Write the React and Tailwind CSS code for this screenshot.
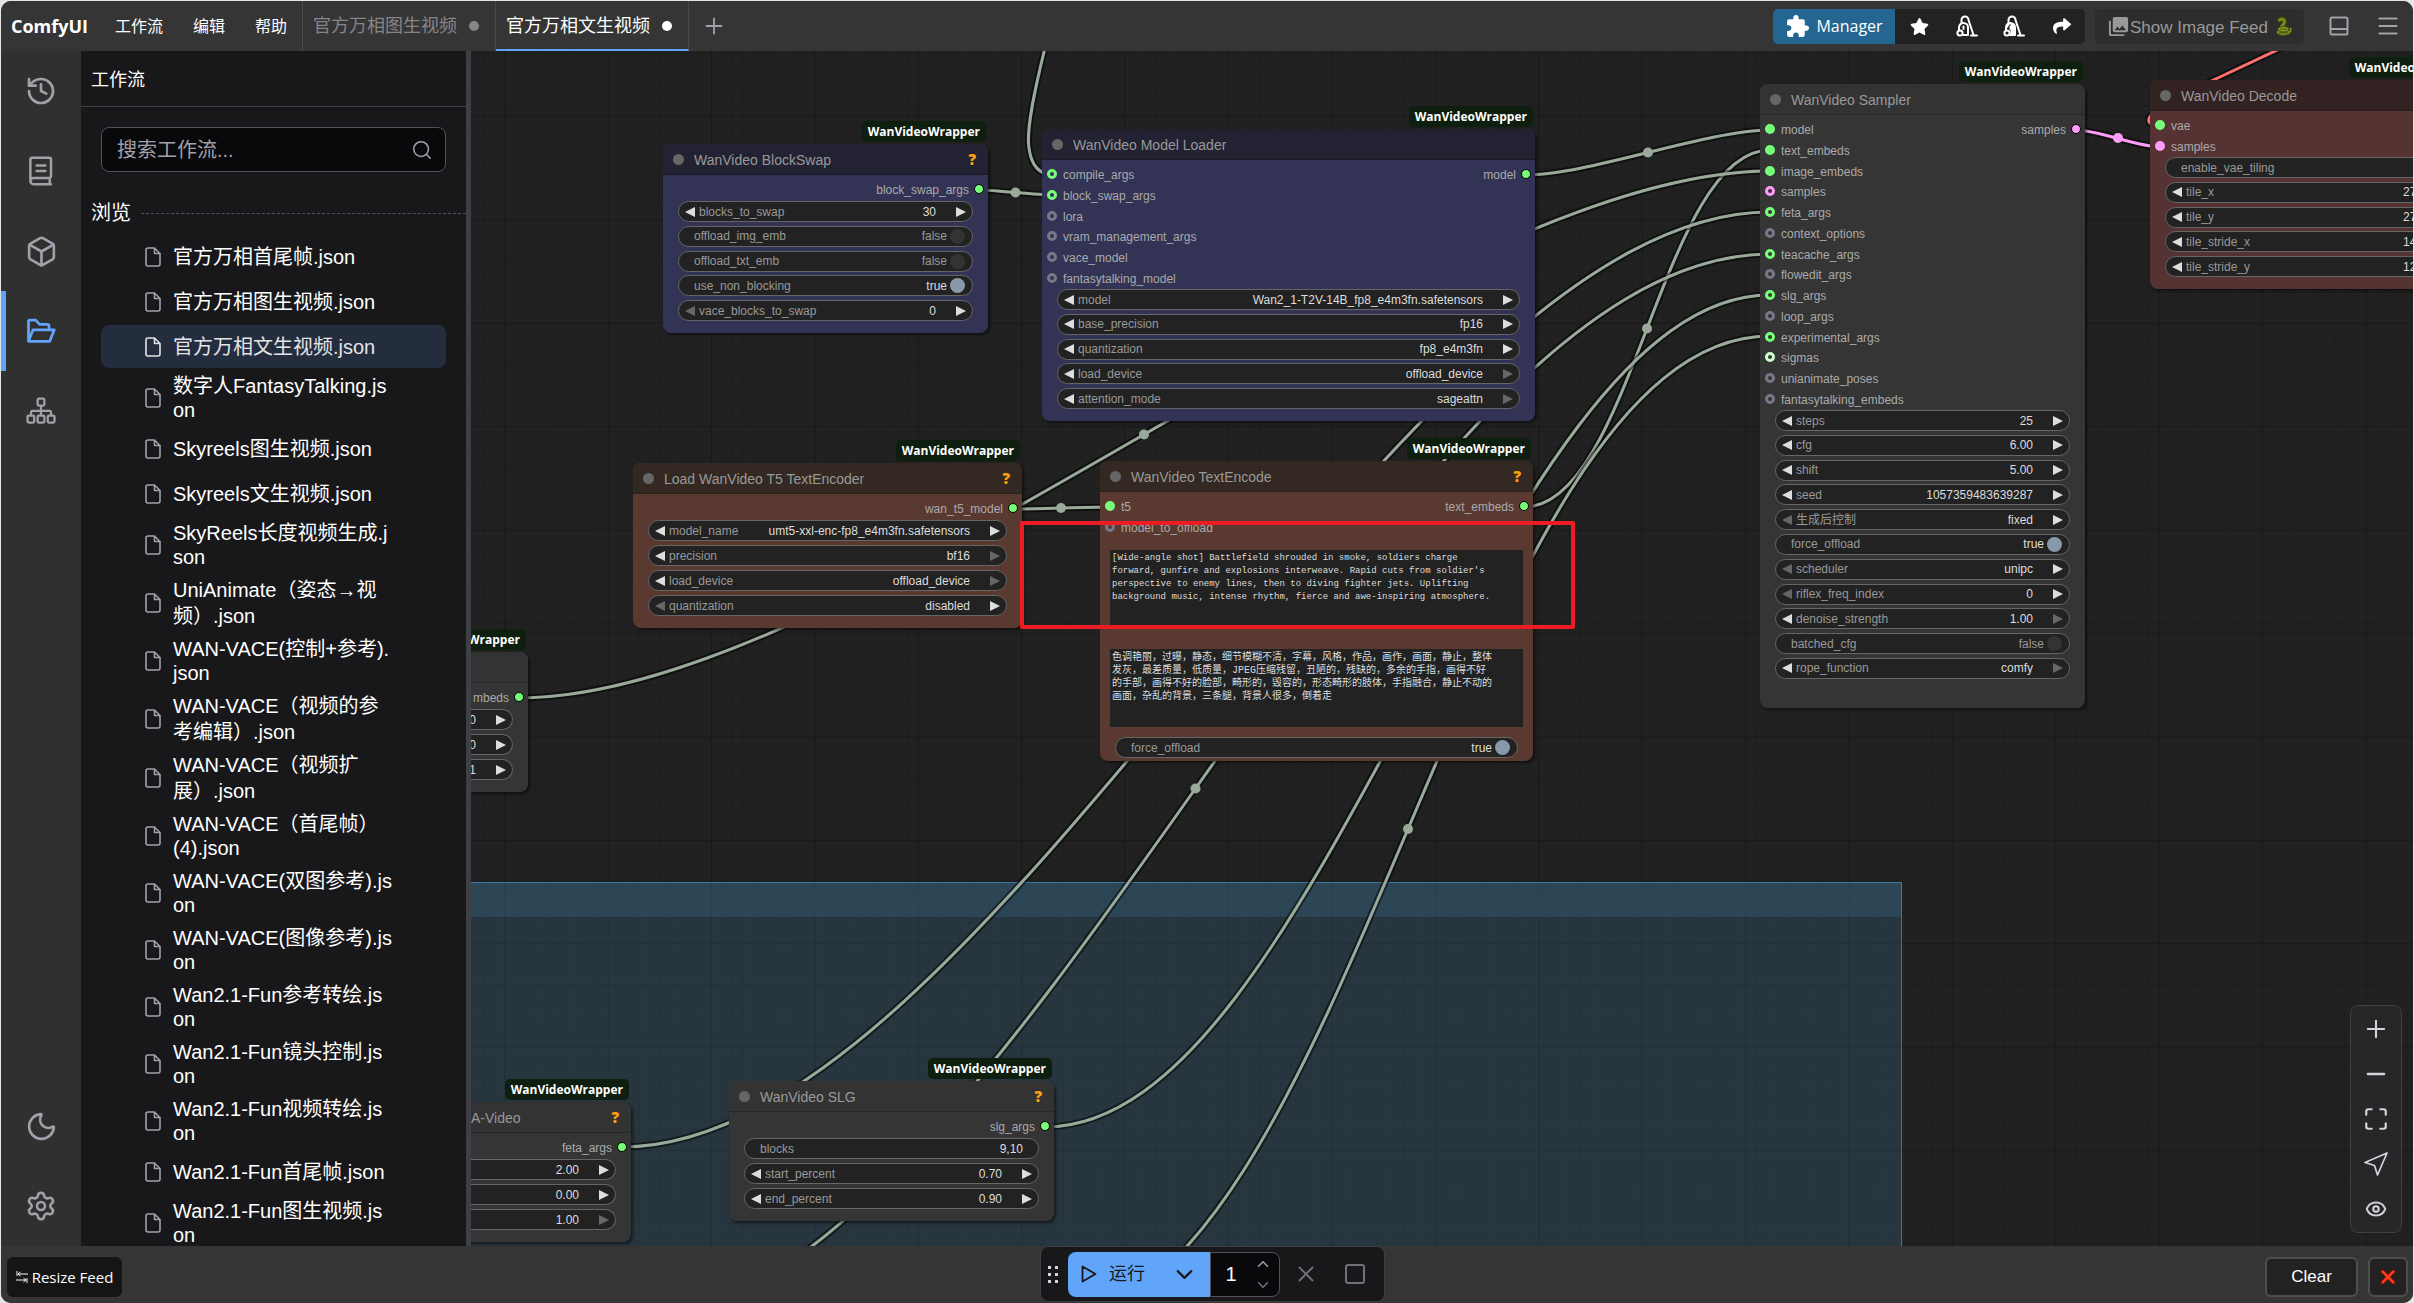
import React, { useId } from "react";
import { Box, ChevronDown, ChevronUp, Eye, History, Maximize, Menu, Minus, Moon, Plus, Search, Settings, X } from "lucide-react";
import { FaShare, FaStar } from "react-icons/fa";
import { MdExtension, MdPhotoLibrary } from "react-icons/md";

/* ---------- icons ---------- */

const BookIcon = () => (
  <svg viewBox="0 0 24 24" className="size-[30px]" fill="none" stroke="currentColor" strokeWidth="2" strokeLinejoin="round" strokeLinecap="round">
    <path d="M3.5 20V3a1.6 1.6 0 0 1 1.6-1.6h13.4a1.5 1.5 0 0 1 1.5 1.5V16a1.5 1.5 0 0 1-1.5 1.5H6a2.5 2.5 0 0 0 0 5h14M19 17.5v5M8.5 7.5h7M8.5 12h7" />
  </svg>
);

const FolderIcon = () => (
  <svg viewBox="0 0 24 24" className="size-[30px]" fill="none" stroke="currentColor" strokeWidth="2.2" strokeLinejoin="round" strokeLinecap="round">
    <path d="M2 19V4.500a1.200 1.200 0 0 1 1.200-1.200h4.600l3 3.400h6.400a1.200 1.200 0 0 1 1.200 1.200v3M2 20.200 5.600 11h17L19 20.200z" />
  </svg>
);

const SitemapIcon = () => (
  <svg viewBox="0 0 24 24" className="size-[30px]" fill="none" stroke="currentColor" strokeWidth="1.8" strokeLinejoin="round">
    <rect x="9.300" y="2" width="5.400" height="5.600" rx="1" />
    <rect x="1.200" y="15.600" width="5.400" height="5.600" rx="1" />
    <rect x="9.300" y="15.600" width="5.400" height="5.600" rx="1" />
    <rect x="17.400" y="15.600" width="5.400" height="5.600" rx="1" />
    <path d="M12 7.600v8M4 15.600v-2.600a1.200 1.200 0 0 1 1.200-1.200h13.600a1.200 1.200 0 0 1 1.200 1.200v2.600" />
  </svg>
);

const FileIcon = () => (
  <svg viewBox="0 0 16 20" className="h-5 w-4 shrink-0" fill="none" stroke="currentColor" strokeWidth="1.6" strokeLinejoin="round">
    <path d="M3 1h6.500L15 6.500V17a2 2 0 0 1-2 2H3a2 2 0 0 1-2-2V3a2 2 0 0 1 2-2zM9.500 1v5.500H15" />
  </svg>
);

const VacuumIcon = ({ solid }) => (
  <svg viewBox="0 0 24 24" className="size-6" fill="none" stroke="currentColor" strokeWidth="2" strokeLinejoin="round" strokeLinecap="round">
    <path d="M6.500 9V6a3.500 3.500 0 0 1 7 0l5 15M16 21.500h6" />
    <path d="M8.500 9a4.500 4.500 0 0 1 4.500 4.500V21H8.500M8.500 9A4.500 4.500 0 0 0 4 13.500V16" fill={solid ? "currentColor" : "none"} />
    <path d="M8.500 12.500v2.500" />
    <circle cx="5" cy="19" r="2.600" />
  </svg>
);

const SnakeIcon = () => (
  <svg viewBox="0 0 18 22" className="h-[22px] w-[16px]" fill="none" strokeLinecap="round" strokeLinejoin="round">
    <path d="M3.500 4.500C6 2 10 2.500 10 6.500c0 3-3.500 3.500-3.500 6" stroke="#3d4a10" strokeWidth="5" />
    <path d="M4 4.500C6 2.500 9.500 3 9.500 6.500c0 3-3.500 3.500-3.500 6" stroke="#7d8a1c" strokeWidth="3" />
    <ellipse cx="8.500" cy="18" rx="8" ry="3.600" fill="#7d8a1c" stroke="#3d4a10" />
    <ellipse cx="8.500" cy="14.500" rx="6.500" ry="3" fill="#8b9a22" stroke="#3d4a10" />
    <path d="M14 18c2 0 3-1 2.500-4" stroke="#7d8a1c" strokeWidth="2" />
    <path d="M5 14.500h7M4 18.500h9" stroke="#3d4a10" />
  </svg>
);

const PanelIcon = () => (
  <svg viewBox="0 0 20 20" className="size-5" fill="none" stroke="currentColor" strokeWidth="2" strokeLinejoin="round">
    <rect x="1.500" y="1.500" width="17" height="17" rx="1.500" />
    <path d="M1.500 13h17" />
  </svg>
);

const Arrow = ({ dir, dim }) => (
  <svg viewBox="0 0 10 10" className={`size-[10px] shrink-0 ${dim ? "text-[#666]" : "text-[#ddd]"}`} fill="currentColor">
    <path d={dir === "left" ? "M10 0v10L0 5z" : "M0 0v10l10-5z"} />
  </svg>
);

/* ---------- sidebar ---------- */

const FILES = [
  ["官方万相首尾帧.json"],
  ["官方万相图生视频.json"],
  ["官方万相文生视频.json", "active"],
  ["数字人FantasyTalking.js\non"],
  ["Skyreels图生视频.json"],
  ["Skyreels文生视频.json"],
  ["SkyReels长度视频生成.j\nson"],
  ["UniAnimate（姿态→视\n频）.json", "tall"],
  ["WAN-VACE(控制+参考).\njson"],
  ["WAN-VACE（视频的参\n考编辑）.json", "tall"],
  ["WAN-VACE（视频扩\n展）.json", "tall"],
  ["WAN-VACE（首尾帧）\n(4).json"],
  ["WAN-VACE(双图参考).js\non"],
  ["WAN-VACE(图像参考).js\non"],
  ["Wan2.1-Fun参考转绘.js\non"],
  ["Wan2.1-Fun镜头控制.js\non"],
  ["Wan2.1-Fun视频转绘.js\non"],
  ["Wan2.1-Fun首尾帧.json"],
  ["Wan2.1-Fun图生视频.js\non"],
];

function FileRow({ name, kind }) {
  const two = name.includes("\n");
  const height = kind === "tall" ? "h-[59px]" : two ? "h-[57px]" : "h-[45px]";
  const look = kind === "active" ? "bg-[#232d3d] text-[#e4e4e7]" : "";
  return (
    <li className={`flex shrink-0 py-px ${height}`}>
      <button type="button" className={`flex w-full items-center gap-3 rounded-lg pl-11 text-left ${look}`}>
        <span className={kind === "active" ? "text-[#e4e4e7]" : "text-[#a1a1aa]"}><FileIcon /></span>
        <span className={`whitespace-pre ${kind === "tall" ? "leading-[26px]" : "leading-[24px]"}`}>{name}</span>
      </button>
    </li>
  );
}

function RailButton({ label, active, children }) {
  return (
    <button type="button" aria-label={label} className={`flex h-20 w-full items-center justify-center border-l-[5px] pr-[5px] ${active ? "border-[#60a5fa] text-[#60a5fa]" : "border-transparent text-[#a1a1aa]"}`}>
      {children}
    </button>
  );
}

/* ---------- nodes ---------- */

const PALETTE = {
  blue: ["bg-[#222233]", "bg-[#333355]"],
  brown: ["bg-[#332922]", "bg-[#593930]"],
  red: ["bg-[#332222]", "bg-[#553333]"],
  gray: ["bg-[#333333]", "bg-[#353535]"],
};

const DOT = {
  g: "bg-[#77ff77] border-[#77ff77]",
  p: "bg-[#ff9cf9] border-[#ff9cf9]",
  og: "border-[#77ff77]",
  op: "border-[#ff9cf9]",
  on: "border-[#777788]",
  os: "border-[#ccffcc]",
};

function Widget({ w, cut }) {
  const id = useId();
  const [type, label, value, dimL, dimR] = w;
  const shell = `flex h-[21px] w-full items-center border border-[#666] bg-[#222] text-[12px] leading-[14px] ${cut ? "rounded-r-full border-l-0" : "rounded-full"}`;
  if (type === "toggle") {
    return (
      <label htmlFor={id} className={`${shell} pl-[15px] pr-[7px]`}>
        <span className="flex-1 text-[#999]">{label}</span>
        <span className={value ? "text-[#ddd]" : "text-[#999]"}>{value ? "true" : "false"}</span>
        <input id={id} type="checkbox" defaultChecked={value} className="ml-[3px] size-[15px] appearance-none rounded-full bg-[#333] checked:bg-[#8899aa]" />
      </label>
    );
  }
  if (type === "text") {
    return (
      <div className={`${shell} px-[15px]`}>
        <label htmlFor={id} className="text-[#999]">{label}</label>
        <input id={id} defaultValue={value} className="min-w-0 flex-1 bg-transparent text-right text-[#ddd] outline-none" />
      </div>
    );
  }
  return (
    <div className={`${shell} px-[6px]`}>
      {!cut && <button type="button" aria-label="decrease"><Arrow dir="left" dim={dimL} /></button>}
      {!cut && <label htmlFor={id} className="ml-1 text-[#999]">{label}</label>}
      {type === "combo" ? (
        <select id={id} defaultValue={value} className="min-w-0 flex-1 appearance-none bg-transparent p-0 text-right text-[#ddd] outline-none [text-align-last:right]">
          <option>{value}</option>
        </select>
      ) : (
        <input id={id} aria-label={cut ? "value" : undefined} defaultValue={value} className="min-w-0 flex-1 bg-transparent text-right text-[#ddd] outline-none" />
      )}
      <button type="button" aria-label="increase" className="ml-5"><Arrow dir="right" dim={dimR} /></button>
    </div>
  );
}

function Node({ place, color, title, badge = "WanVideoWrapper", help, slots, slotsH, outputs = [], widgets, widgetsH, pad = "pb-3", cut, children }) {
  const [head, body] = PALETTE[color];
  return (
    <section className={`absolute ${place} ${body} ${cut ? "rounded-r-lg" : "rounded-lg"} shadow-[2px_2px_3px_rgba(0,0,0,0.5)]`}>
      <span className="absolute right-[2px] bottom-full mb-[2px] flex h-[21px] items-center rounded-[5px] bg-[#0f1f0f] px-[6px] font-['Open_Sans',sans-serif] text-[12px] font-bold whitespace-nowrap text-white">
        {badge}
      </span>
      <header className={`flex h-[31px] items-center border-b border-black/20 pr-[12px] ${head} ${cut ? "rounded-tr-lg" : "rounded-t-lg pl-[10px]"}`}>
        {!cut && <span className="mr-[10px] size-[11px] rounded-full bg-[#666]" />}
        <h2 className={`flex-1 pt-[2px] text-[14px] whitespace-nowrap text-[#999] ${cut ? "pl-2" : ""}`}>{title}</h2>
        {help && <button type="button" className="font-['Open_Sans',sans-serif] text-[15px] font-extrabold text-[#ffa10a]">?</button>}
      </header>
      <div className={`pt-1 ${pad}`}>
        <div className={`flex justify-between text-[12px] leading-[20px] text-[#aaa] ${slotsH}`}>
          <ul className={`flex flex-col justify-between ${cut ? "" : "pl-[5px]"}`}>
            {slots.map(([kind, name]) => (
              <li key={name} className="flex h-5 items-center gap-[6px]">
                <span className={`size-[10px] rounded-full border-[3px] ${DOT[kind]}`} />
                <span className="pt-[2px]">{name}</span>
              </li>
            ))}
          </ul>
          <ul className="pr-1">
            {outputs.map(([kind, name]) => (
              <li key={name} className="flex h-5 items-center gap-[5px]">
                <span className="pt-[2px]">{name}</span>
                <span className={`size-[10px] rounded-full border border-black ${kind === "p" ? "bg-[#ff9cf9]" : "bg-[#77ff77]"}`} />
              </li>
            ))}
          </ul>
        </div>
        {children}
        <div className={`mt-px flex flex-col justify-between ${widgetsH} ${cut ? "pr-[15px]" : "px-[15px]"}`}>
          {widgets.map((w, i) => <Widget key={i} w={w} cut={cut} />)}
        </div>
      </div>
    </section>
  );
}

/* ---------- links ---------- */

function spline(x0, y0, x1, y1) {
  const d = Math.hypot(x1 - x0, y1 - y0) / 4;
  return `M${x0} ${y0}C${x0 + d} ${y0} ${x1 - d} ${y1} ${x1} ${y1}`;
}

const LINKS = [
  [979, 190, 1052, 195], [1526, 175, 1770, 130], [1524, 507, 1770, 150], [518, 698, 1770, 171], [1013, 509, 1109, 507],
  [621, 1147, 1770, 212], [621, 1323, 1770, 254], [1045, 1127, 1770, 295], [1046, 1322, 1770, 336],
];

function Link({ d, color = "#9aaa9a", dot }) {
  return (
    <g>
      <path d={d} fill="none" stroke="#000" strokeOpacity="0.5" strokeWidth="7" />
      <path d={d} fill="none" stroke={color} strokeWidth="3" />
      {dot && <circle cx={dot[0]} cy={dot[1]} r="5" fill={color} />}
    </g>
  );
}

function Backdrop() {
  return (
    <svg className="absolute inset-0 size-full" aria-hidden="true">
      <defs>
        <pattern id="grid" width="100" height="100" patternUnits="userSpaceOnUse" patternTransform="translate(711 116) scale(1.034)">
          <path d="M10.500 0V100M20.500 0V100M30.500 0V100M40.500 0V100M50.500 0V100M60.500 0V100M70.500 0V100M80.500 0V100M90.500 0V100M0 10.500H100M0 20.500H100M0 30.500H100M0 40.500H100M0 50.500H100M0 60.500H100M0 70.500H100M0 80.500H100M0 90.500H100" stroke="#000" strokeOpacity="0.11" />
          <path d="M0.500 0V100M0 0.500H100" stroke="#000" strokeOpacity="0.25" />
        </pattern>
      </defs>
      <g transform="translate(-471 -51)">
        <rect x="471" y="51" width="100%" height="100%" fill="url(#grid)" />
        <rect x="400" y="882" width="1502" height="35" fill="#3f789e" fillOpacity="0.43" />
        <rect x="400" y="917" width="1502" height="600" fill="#3f789e" fillOpacity="0.24" />
        <path d="M400 882.500H1901.500V1500" fill="none" stroke="#3f789e" />
        <Link d="M1046 44C1034 92 1026 130 1029 148C1031 164 1038 174 1052 175" />
        {LINKS.map(([a, b, c, e]) => <Link key={`${a}-${b}`} d={spline(a, b, c, e)} dot={[(a + c) / 2, (b + e) / 2]} />)}
        <Link d="M2290 44L2205 84C2150 108 2136 124 2160 126" color="#ff6e6e" />
        <Link d={spline(2076, 130, 2160, 147)} color="#ff9cf9" dot={[2118, 138]} />
      </g>
    </svg>
  );
}

const POSITIVE = "[Wide-angle shot] Battlefield shrouded in smoke, soldiers charge\nforward, gunfire and explosions interweave. Rapid cuts from soldier's\nperspective to enemy lines, then to diving fighter jets. Uplifting\nbackground music, intense rhythm, fierce and awe-inspiring atmosphere.";
const NEGATIVE = "色调艳丽，过曝，静态，细节模糊不清，字幕，风格，作品，画作，画面，静止，整体\n发灰，最差质量，低质量，JPEG压缩残留，丑陋的，残缺的，多余的手指，画得不好\n的手部，画得不好的脸部，畸形的，毁容的，形态畸形的肢体，手指融合，静止不动的\n画面，杂乱的背景，三条腿，背景人很多，倒着走";

function Canvas() {
  return (
    <main className="relative min-w-0 flex-1 overflow-hidden bg-[#212121]">
      <Backdrop />
      <Node place="left-[192px] top-[93px] w-[325px]" color="blue" title="WanVideo BlockSwap" help slots={[]} slotsH="h-[21px]" outputs={[["g", "block_swap_args"]]} widgetsH="h-[120px]"
        widgets={[["num", "blocks_to_swap", "30"], ["toggle", "offload_img_emb", false], ["toggle", "offload_txt_emb", false], ["toggle", "use_non_blocking", true], ["num", "vace_blocks_to_swap", "0", true]]} />
      <Node place="left-[571px] top-[78px] w-[493px]" color="blue" title="WanVideo Model Loader" slotsH="h-[124px]" outputs={[["g", "model"]]} widgetsH="h-[120px]"
        slots={[["og", "compile_args"], ["og", "block_swap_args"], ["on", "lora"], ["on", "vram_management_args"], ["on", "vace_model"], ["on", "fantasytalking_model"]]}
        widgets={[["combo", "model", "Wan2_1-T2V-14B_fp8_e4m3fn.safetensors"], ["combo", "base_precision", "fp16"], ["combo", "quantization", "fp8_e4m3fn"], ["combo", "load_device", "offload_device", false, true], ["combo", "attention_mode", "sageattn", false, true]]} />
      <Node place="left-[1289px] top-[33px] w-[325px]" color="gray" title="WanVideo Sampler" slotsH="h-[290px]" outputs={[["p", "samples"]]} widgetsH="h-[269px]" pad="pb-[29px]"
        slots={[["g", "model"], ["g", "text_embeds"], ["g", "image_embeds"], ["op", "samples"], ["og", "feta_args"], ["on", "context_options"], ["og", "teacache_args"], ["on", "flowedit_args"], ["og", "slg_args"], ["on", "loop_args"], ["og", "experimental_args"], ["os", "sigmas"], ["on", "unianimate_poses"], ["on", "fantasytalking_embeds"]]}
        widgets={[["num", "steps", "25"], ["num", "cfg", "6.00"], ["num", "shift", "5.00"], ["num", "seed", "1057359483639287"], ["combo", "生成后控制", "fixed", true], ["toggle", "force_offload", true], ["combo", "scheduler", "unipc", true], ["num", "riflex_freq_index", "0", true], ["num", "denoise_strength", "1.00", false, true], ["toggle", "batched_cfg", false], ["combo", "rope_function", "comfy", false, true]]} />
      <Node place="left-[1679px] top-[29px] w-[325px]" color="red" title="WanVideo Decode" slotsH="h-[41px]" widgetsH="h-[120px]"
        slots={[["g", "vae"], ["p", "samples"]]}
        widgets={[["toggle", "enable_vae_tiling", true], ["num", "tile_x", "272"], ["num", "tile_y", "272"], ["num", "tile_stride_x", "144"], ["num", "tile_stride_y", "128"]]} />
      <Node place="left-[162px] top-[412px] w-[389px]" color="brown" title="Load WanVideo T5 TextEncoder" help slots={[]} slotsH="h-[21px]" outputs={[["g", "wan_t5_model"]]} widgetsH="h-[96px]"
        widgets={[["combo", "model_name", "umt5-xxl-enc-fp8_e4m3fn.safetensors"], ["combo", "precision", "bf16", false, true], ["combo", "load_device", "offload_device", false, true], ["combo", "quantization", "disabled", true]]} />
      <Node place="left-[629px] top-[410px] w-[433px]" color="brown" title="WanVideo TextEncode" help slotsH="h-[41px]" outputs={[["g", "text_embeds"]]} widgetsH="h-[21px]" pad="pb-[3px]"
        slots={[["g", "t5"], ["on", "model_to_offload"]]} widgets={[["toggle", "force_offload", true]]}>
        <div className="mt-[13px] mb-[10px] flex flex-col gap-[21px] px-[10px]">
          <textarea aria-label="positive prompt" defaultValue={POSITIVE} className="h-[78px] w-full resize-none overflow-hidden bg-[#222] p-[2px] font-['Liberation_Mono',monospace] text-[9px] leading-[13px] whitespace-pre text-[#ddd]" />
          <textarea aria-label="negative prompt" defaultValue={NEGATIVE} className="h-[78px] w-full resize-none overflow-hidden bg-[#222] p-[2px] font-['Liberation_Mono','Noto_Sans_CJK_SC',monospace] text-[10px] leading-[13px] whitespace-pre text-[#ddd]" />
        </div>
      </Node>
      <Node place="-left-[8px] top-[601px] w-[65px]" color="gray" title="" badge="Wrapper" cut slots={[]} slotsH="h-[21px]" outputs={[["g", "mbeds"]]} widgetsH="h-[71px]"
        widgets={[["num", "", "0"], ["num", "", "0"], ["num", "", "1"]]} />
      <Node place="-left-[8px] top-[1051px] w-[168px]" color="gray" title="A-Video" help cut slots={[]} slotsH="h-[21px]" outputs={[["g", "feta_args"]]} widgetsH="h-[71px]"
        widgets={[["num", "", "2.00"], ["num", "", "0.00"], ["num", "", "1.00", false, true]]} />
      <Node place="left-[258px] top-[1030px] w-[325px]" color="gray" title="WanVideo SLG" help slots={[]} slotsH="h-[21px]" outputs={[["g", "slg_args"]]} widgetsH="h-[71px]"
        widgets={[["text", "blocks", "9,10"], ["num", "start_percent", "0.70"], ["num", "end_percent", "0.90"]]} />

      <div className="absolute top-[470px] left-[549px] h-[108px] w-[555px] rounded-[2px] border-4 border-[#ed1c24]" />

      <div className="absolute right-[11px] bottom-[13px] flex w-[52px] flex-col rounded-lg border border-[#3f3f46] bg-[#27272a] text-[#d4d4d8]">
        <button type="button" aria-label="zoom in" className="flex h-[45px] items-center justify-center"><Plus size={28} strokeWidth={1.8} /></button>
        <button type="button" aria-label="zoom out" className="flex h-[45px] items-center justify-center"><Minus size={28} strokeWidth={2} /></button>
        <button type="button" aria-label="fit view" className="flex h-[45px] items-center justify-center"><Maximize size={26} strokeWidth={2} /></button>
        <button type="button" aria-label="select mode" className="flex h-[45px] items-center justify-center">
          <svg viewBox="0 0 24 24" className="size-6" fill="none" stroke="currentColor" strokeWidth="1.700" strokeLinejoin="round"><path d="M23 1 13.500 23l-3-9.500L1 10.500z" /></svg>
        </button>
        <button type="button" aria-label="toggle links" className="flex h-[46px] items-center justify-center"><Eye size={22} strokeWidth={2.2} /></button>
      </div>
    </main>
  );
}

/* ---------- shell ---------- */

function TopBar() {
  return (
    <header className="flex h-[50px] shrink-0 items-stretch bg-[#353535] text-white">
      <div className="flex w-[302px] items-center border-r border-[#4a4a4d] pl-[10px] whitespace-nowrap">
        <h1 className="w-[104px] font-['Open_Sans',sans-serif] text-[18px] font-bold">ComfyUI</h1>
        <nav className="flex gap-[30px] pt-[2px] text-[16px]">
          <button type="button">工作流</button>
          <button type="button">编辑</button>
          <button type="button">帮助</button>
        </nav>
      </div>
      <button type="button" className="flex w-[193px] items-center justify-between border-r border-[#4a4a4d] pr-[16px] pl-[10px] text-[18px] whitespace-nowrap text-[#85858a]">
        官方万相图生视频<span className="size-[10px] rounded-full bg-[#85858a]" />
      </button>
      <button type="button" className="flex w-[193px] items-center justify-between border-r border-b-2 border-r-[#4a4a4d] border-b-[#60a5fa] pt-[2px] pr-[16px] pl-[10px] text-[18px] whitespace-nowrap">
        官方万相文生视频<span className="size-[10px] rounded-full bg-white" />
      </button>
      <button type="button" aria-label="new workflow" className="w-[50px] pl-[12px] text-[#a1a1aa]"><Plus size={26} strokeWidth={1.7} /></button>
      <div className="flex-1" />
      <div className="flex items-center pr-[12px]">
        <div className="flex h-[35px] overflow-hidden rounded-[5px] bg-[#222]">
          <button type="button" className="flex w-[122px] items-center justify-center gap-[6px] bg-[#236692] font-['Open_Sans',sans-serif] text-[16px]">
            <MdExtension size={25} />Manager
          </button>
          <button type="button" aria-label="favorites" className="flex w-[48px] items-center justify-center"><FaStar size={19} /></button>
          <button type="button" aria-label="unload models" className="flex w-[47px] items-center justify-center"><VacuumIcon /></button>
          <button type="button" aria-label="free cache" className="flex w-[48px] items-center justify-center"><VacuumIcon solid /></button>
          <button type="button" aria-label="share" className="flex w-[47px] items-center justify-center"><FaShare size={18} /></button>
        </div>
        <button type="button" className="ml-[10px] flex h-[35px] w-[209px] items-center justify-center rounded-[5px] bg-[#2d2d2d] text-[17px] whitespace-nowrap text-[#999]">
          <MdPhotoLibrary size={23} /><span className="pt-[3px]">Show Image Feed</span><span className="ml-2"><SnakeIcon /></span>
        </button>
        <button type="button" aria-label="toggle bottom panel" className="ml-[25px] text-[#a1a1aa]"><PanelIcon /></button>
        <button type="button" aria-label="menu" className="ml-[26px] text-[#a1a1aa]"><Menu size={26} strokeWidth={1.8} /></button>
      </div>
    </header>
  );
}

function Footer() {
  return (
    <footer className="flex h-[57px] shrink-0 items-center bg-[#353535] pr-[5px] pl-[6px]">
      <div className="flex-1 pt-[5px]">
        <button type="button" className="flex h-10 w-[115px] items-center justify-center gap-1 rounded-md bg-[#151515] font-['Open_Sans',sans-serif] text-[15px] whitespace-nowrap text-white">
          <svg viewBox="0 0 12 12" className="size-3" fill="none" stroke="currentColor"><path d="M1 0v5M12 3H2M4.500 1 2 3l2.500 2M11 7v5M0 9h10M7.500 7 10 9l-2.500 2" /></svg>
          Resize Feed
        </button>
      </div>
      <div className="ml-[10px] flex h-[56px] w-[345px] items-center self-start rounded-lg border border-[#3f3f46] bg-[#18181b]">
        <div className="grid grid-cols-2 gap-1 pr-[10px] pl-[7px]">
          {[0, 1, 2, 3, 4, 5].map((i) => <span key={i} className="size-[3px] bg-[#d4d4d8]" />)}
        </div>
        <button type="button" className="flex h-[45px] w-[90px] items-center justify-center gap-3 rounded-l-lg bg-[#60a5fa] text-[18px] whitespace-nowrap text-[#18181b]">
          <svg viewBox="0 0 16 18" className="h-[18px] w-4 shrink-0" fill="none" stroke="currentColor" strokeWidth="1.800" strokeLinejoin="round"><path d="M1.500 1.500v15L14.500 9z" /></svg>
          运行
        </button>
        <button type="button" aria-label="run options" className="flex h-[45px] w-[52px] items-center justify-center bg-[#60a5fa] text-[#18181b]"><ChevronDown size={27} strokeWidth={1.9} /></button>
        <div className="flex h-[45px] w-[70px] items-center rounded-r-lg border border-[#52525b] bg-[#09090b]">
          <input aria-label="batch count" defaultValue="1" className="w-10 bg-transparent text-center text-[20px] text-white outline-none" />
          <div className="flex flex-col gap-[3px] pl-[3px]">
            <button type="button" aria-label="more" className="text-[#a1a1aa]"><ChevronUp size={18} /></button>
            <button type="button" aria-label="fewer" className="text-[#71717a]"><ChevronDown size={18} /></button>
          </div>
        </div>
        <button type="button" aria-label="cancel" className="ml-[13px] text-[#71717a]"><X size={26} strokeWidth={1.7} /></button>
        <button type="button" aria-label="stop" className="ml-[26px] size-5 rounded-[3px] border-2 border-[#71717a]" />
      </div>
      <div className="flex flex-1 justify-end gap-[10px] pt-[5px]">
        <button type="button" className="h-10 w-[93px] rounded-md border-2 border-[#4e4e4e] bg-[#222] text-[17px] text-white">Clear</button>
        <button type="button" aria-label="close feed" className="flex size-10 items-center justify-center rounded-md border-2 border-[#4e4e4e] bg-[#222]">
          <svg viewBox="0 0 18 18" className="size-4" strokeLinecap="round"><path d="M3 3l12 12M15 3 3 15" stroke="#5c1408" strokeWidth="5" /><path d="M3 3l12 12M15 3 3 15" stroke="#ff3b1f" strokeWidth="3" /></svg>
        </button>
      </div>
    </footer>
  );
}

export default function App() {
  return (
    <div className="h-screen overflow-hidden bg-[#e4e6e6] px-px pt-px font-['Liberation_Sans','Noto_Sans_CJK_SC',sans-serif]">
      <div className="flex h-full flex-col overflow-hidden rounded-[10px] bg-[#353535]">
        <TopBar />
        <div className="flex min-h-0 flex-1">
          <nav className="flex w-20 shrink-0 flex-col bg-[#303030]">
            <RailButton label="queue"><History size={32} strokeWidth={2} /></RailButton>
            <RailButton label="nodes"><BookIcon /></RailButton>
            <RailButton label="models"><Box size={33} strokeWidth={1.9} /></RailButton>
            <RailButton label="workflows" active><FolderIcon /></RailButton>
            <RailButton label="templates"><SitemapIcon /></RailButton>
            <div className="flex-1" />
            <RailButton label="theme"><Moon size={33} strokeWidth={1.9} /></RailButton>
            <RailButton label="settings"><Settings size={32} strokeWidth={1.9} /></RailButton>
          </nav>
          <aside className="flex w-[385px] shrink-0 flex-col overflow-hidden bg-[#18181b] text-[20px] text-white">
            <h2 className="flex h-[56px] shrink-0 items-center border-b border-[#3f3f46] pt-[3px] pl-[10px] text-[18px]">工作流</h2>
            <div className="mx-5 mt-5 flex h-[45px] shrink-0 items-center rounded-lg border border-[#52525b] bg-[#09090b] pr-3 pl-[15px]">
              <input aria-label="搜索工作流" placeholder="搜索工作流..." className="min-w-0 flex-1 bg-transparent outline-none placeholder:text-[#a1a1aa]" />
              <Search size={22} strokeWidth={1.7} className="text-[#a1a1aa]" />
            </div>
            <h3 className="mt-[25px] flex h-8 shrink-0 items-center gap-[10px] pl-[10px] after:flex-1 after:border-t after:border-dashed after:border-[#52525b]">浏览</h3>
            <ul className="mt-[5px] flex min-h-0 flex-1 flex-col overflow-hidden px-5">
              {FILES.map(([name, kind]) => <FileRow key={name} name={name} kind={kind} />)}
            </ul>
          </aside>
          <div className="w-[5px] shrink-0 bg-[#3f3f46]" />
          <Canvas />
        </div>
        <Footer />
      </div>
    </div>
  );
}
